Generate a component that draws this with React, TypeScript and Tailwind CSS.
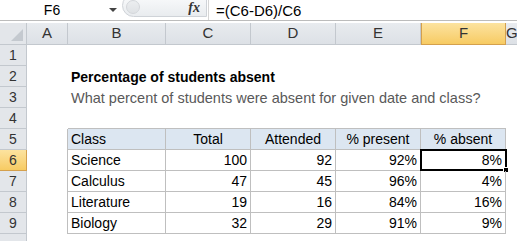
import React from "react";

type Row = {
  n: number;
  cells: { [col: string]: React.ReactNode };
  table?: boolean;
  head?: boolean;
};

const rows: Row[] = [
  { n: 1, cells: {} },
  {
    n: 2,
    cells: {
      B: <span className="font-bold text-black">Percentage of students absent</span>,
    },
  },
  {
    n: 3,
    cells: {
      B: (
        <span className="text-[14.5px] text-[#595959]">
          What percent of students were absent for given date and class?
        </span>
      ),
    },
  },
  { n: 4, cells: {} },
  {
    n: 5,
    table: true,
    head: true,
    cells: { B: "Class", C: "Total", D: "Attended", E: "% present", F: "% absent" },
  },
  { n: 6, table: true, cells: { B: "Science", C: "100", D: "92", E: "92%", F: "8%" } },
  { n: 7, table: true, cells: { B: "Calculus", C: "47", D: "45", E: "96%", F: "4%" } },
  { n: 8, table: true, cells: { B: "Literature", C: "19", D: "16", E: "84%", F: "16%" } },
  { n: 9, table: true, cells: { B: "Biology", C: "32", D: "29", E: "91%", F: "9%" } },
  { n: 10, cells: {} },
];

const letters = ["A", "B", "C", "D", "E", "F", "G"];

function FormulaBar() {
  return (
    <div className="flex h-[21px] items-stretch border-b border-[#bcbcbc] bg-white">
      {/* name box */}
      <div className="relative flex w-[122px] items-center">
        <span className="w-[104px] text-center text-[14px] leading-none text-black">F6</span>
        <span className="ml-[5px] h-0 w-0 border-x-[4px] border-t-[4px] border-x-transparent border-t-[#444]" />
      </div>
      {/* splitter knob + fx */}
      <div className="relative -mt-[6px] flex h-[23px] w-[85px] items-end overflow-hidden rounded-l-[14px] border border-[#cfd3d8] bg-gradient-to-b from-[#fafbfc] to-[#e9ecef]">
        <div className="mb-[2px] ml-[3px] h-[14px] w-[14px] rounded-full border border-[#d3d6da] bg-gradient-to-b from-[#eceef0] to-[#dfe2e5]" />
        <span
          className="absolute bottom-[1px] right-[6px] text-[14px] font-bold italic leading-none text-[#333]"
          style={{ fontFamily: '"Liberation Serif", serif' }}
        >
          fx
        </span>
      </div>
      <div className="ml-[1px] w-[1px] bg-[#d5d5d5]" />
      <div className="flex items-center pl-[7px] text-[15px] leading-none text-black">
        =(C6-D6)/C6
      </div>
    </div>
  );
}

function ColHeader({ l }: { l: string }) {
  if (l === "F") {
    return (
      <div className="flex items-center justify-center border border-t-0 border-[#d4a04d] bg-gradient-to-b from-[#fce39f] to-[#f7cb62] text-[15px] text-[#333]">
        {l}
      </div>
    );
  }
  return (
    <div className="flex items-center justify-center border-b border-r border-[#c3c8ce] bg-gradient-to-b from-[#e8ebef] to-[#dde1e6] text-[15px] text-[#333]">
      {l}
    </div>
  );
}

function RowHeader({ n }: { n: number }) {
  if (n === 6) {
    return (
      <div className="flex items-center justify-center border-b border-r border-[#d4a04d] bg-gradient-to-b from-[#fce39f] to-[#f7cb62] text-[14px] text-[#333]">
        {n}
      </div>
    );
  }
  // row 10 is only partly in view; its number falls below the window
  return (
    <div className="flex items-center justify-center border-b border-r border-[#c3c8ce] bg-[#e3e6ea] text-[14px] text-[#333]">
      {n < 10 ? n : null}
    </div>
  );
}

function SheetCell({ row, col }: { row: Row; col: string }) {
  const content = row.cells[col];
  const inTable = row.table && col >= "B" && col <= "F";
  const aboveTable = row.n === 4 && col >= "B" && col <= "F";
  const leftOfTable = row.table && col === "A";
  const isNum = inTable && !row.head && col !== "B";
  const centered = row.head && col !== "B";

  let cls = "relative flex items-end whitespace-nowrap px-[3px] pb-[1px] text-[14px] leading-[17px] text-black";
  if (inTable) cls += " border-b border-r border-[#bfbfbf]";
  if (inTable && row.head) cls += " bg-[#dce6f1]";
  if (aboveTable) cls += " border-b border-[#bfbfbf]";
  if (leftOfTable) cls += " border-r border-[#bfbfbf]";
  if (isNum) cls += " justify-end";
  if (centered) cls += " justify-center";

  const selected = row.n === 6 && col === "F";

  return (
    <div className={cls}>
      {content}
      {selected && (
        <>
          <div className="pointer-events-none absolute -left-[1px] -top-[1px] bottom-[-1px] right-[-2px] border-2 border-black" />
          <div className="absolute bottom-[-3px] right-[-4px] h-[6px] w-[6px] border border-white bg-black" />
        </>
      )}
    </div>
  );
}

export default function App() {
  return (
    <div
      className="h-[241px] w-[517px] overflow-hidden bg-white"
      style={{ fontFamily: '"Liberation Sans", Arial, sans-serif' }}
    >
      <FormulaBar />
      <div className="mt-[2px] grid grid-cols-[27px_41px_98px_85px_85px_85px_85px_1fr] grid-rows-[22px_repeat(10,21px)]">
        {/* corner */}
        <div className="relative border-b border-r border-[#c3c8ce] bg-[#e3e6ea]">
          <div className="absolute bottom-[3px] right-[3px] h-0 w-0 border-l-[12px] border-t-[12px] border-l-transparent border-t-transparent border-b-0 border-r-[12px] border-r-[#c4c9cf]" />
        </div>
        {letters.map((l) => (
          <ColHeader key={l} l={l} />
        ))}
        {rows.map((row) => (
          <React.Fragment key={row.n}>
            <RowHeader n={row.n} />
            {letters.map((c) => (
              <SheetCell key={c} row={row} col={c} />
            ))}
          </React.Fragment>
        ))}
      </div>
    </div>
  );
}
